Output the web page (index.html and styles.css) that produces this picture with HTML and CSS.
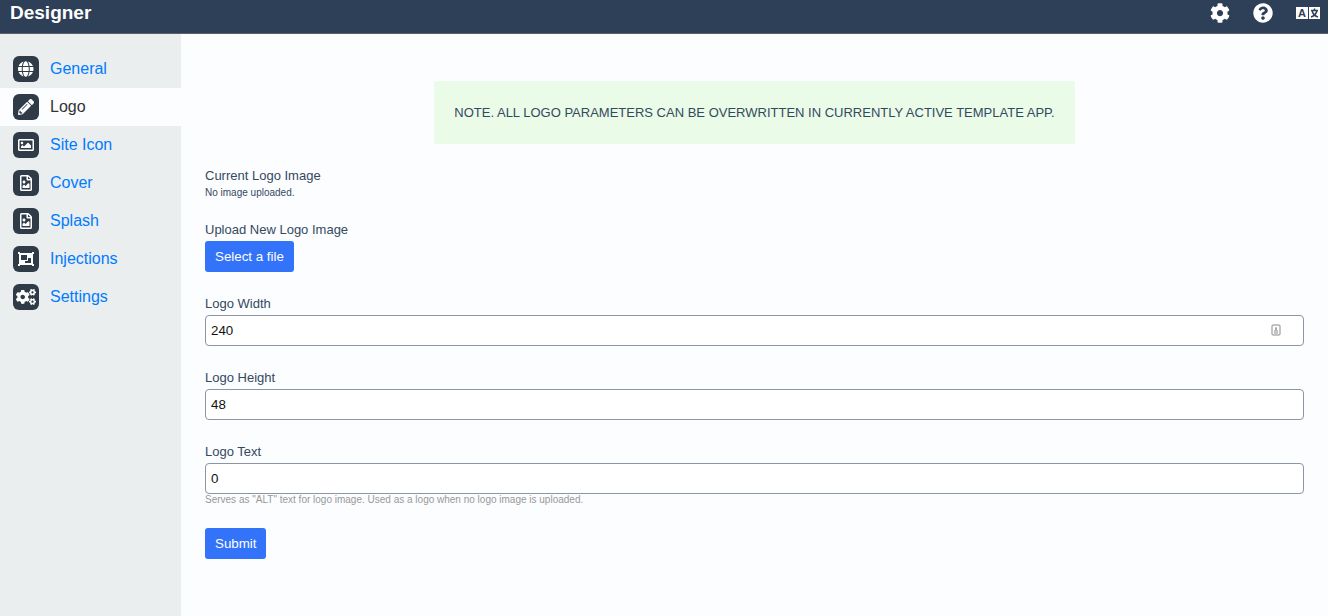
FILE: index.html
```html
<!DOCTYPE html>
<html lang="en">
<head>
    <meta charset="UTF-8">
    <meta name="viewport" content="width=device-width, initial-scale=1.0">
    <title>Designer</title>
    <link rel="stylesheet" href="styles.css">
</head>
<body>
    <header class="header">
        <h1 class="title">Designer</h1>
        <nav class="tools">
            <a href="#settings" aria-label="Settings">
                <svg class="tool-icon" viewBox="0 0 512 512"><path d="M487.4 315.7l-42.6-24.6c4.3-23.2 4.3-47 0-70.2l42.6-24.6c4.9-2.8 7.1-8.6 5.5-14-11.1-35.6-30-67.8-54.7-94.6-3.8-4.1-10-5.1-14.8-2.3L380.8 110c-17.9-15.4-38.5-27.3-60.8-35.1V25.8c0-5.6-3.9-10.5-9.4-11.7-36.7-8.2-74.3-7.8-109.2 0-5.5 1.2-9.4 6.1-9.4 11.7V75c-22.2 7.9-42.8 19.8-60.8 35.1L88.7 85.5c-4.9-2.8-11-1.9-14.8 2.3-24.7 26.7-43.6 58.9-54.7 94.6-1.7 5.4.6 11.2 5.5 14L67.3 221c-4.3 23.2-4.3 47 0 70.2l-42.6 24.6c-4.9 2.8-7.1 8.6-5.5 14 11.1 35.6 30 67.8 54.7 94.6 3.8 4.1 10 5.1 14.8 2.3l42.6-24.6c17.9 15.4 38.5 27.3 60.8 35.1v49.2c0 5.6 3.9 10.5 9.4 11.7 36.7 8.2 74.3 7.8 109.2 0 5.5-1.2 9.4-6.1 9.4-11.7v-49.2c22.2-7.9 42.8-19.8 60.8-35.1l42.6 24.6c4.9 2.8 11 1.9 14.8-2.3 24.7-26.7 43.6-58.9 54.7-94.6 1.5-5.5-.7-11.3-5.6-14.1zM256 336c-44.1 0-80-35.9-80-80s35.9-80 80-80 80 35.9 80 80-35.9 80-80 80z"/></svg>
            </a>
            <a href="#help" aria-label="Help">
                <svg class="tool-icon" viewBox="0 0 512 512"><path d="M504 256c0 136.997-111.043 248-248 248S8 392.997 8 256C8 119.083 119.043 8 256 8s248 111.083 248 248zM262.655 90c-54.497 0-89.255 22.957-116.549 63.758-3.536 5.286-2.353 12.415 2.715 16.258l34.699 26.31c5.205 3.947 12.621 3.008 16.665-2.122 17.864-22.658 30.113-35.797 57.303-35.797 20.429 0 45.698 13.148 45.698 32.958 0 14.976-12.363 22.667-32.534 33.976C247.128 238.528 216 254.941 216 296v4c0 6.627 5.373 12 12 12h56c6.627 0 12-5.373 12-12v-1.333c0-28.462 83.186-29.647 83.186-106.667 0-58.002-60.165-102-116.531-102zM256 338c-25.365 0-46 20.635-46 46 0 25.364 20.635 46 46 46s46-20.636 46-46c0-25.365-20.635-46-46-46z"/></svg>
            </a>
            <a href="#language" aria-label="Language">
                <svg class="tool-icon language" viewBox="0 0 24 20"><path d="M0 4h12v12H0zM13 4h11v12H13z"/><text class="latin" x="6" y="14">A</text><path class="stroke" d="M18.5 5.5v2M15 7.5h7M21 7.5q-1 5-6 6.5M16 7.5q1 5 6 6.5"/></svg>
            </a>
        </nav>
    </header>
    <div class="layout">
        <nav class="sidebar">
            <a class="item" href="#general">
                <span class="badge"><svg viewBox="0 0 496 512"><path d="M336.5 160C322 70.7 287.8 8 248 8s-74 62.7-88.5 152h177zM152 256c0 22.2 1.2 43.5 3.3 64h185.3c2.1-20.5 3.3-41.8 3.3-64s-1.2-43.5-3.3-64H155.3c-2.1 20.5-3.3 41.8-3.3 64zm324.7-96c-28.6-67.9-86.5-120.4-158-141.6 24.4 33.8 41.2 84.7 50 141.6h108zM177.2 18.4C105.8 39.6 47.8 92.1 19.3 160h108c8.7-56.9 25.5-107.8 49.9-141.6zM487.4 192H372.7c2.1 21 3.3 42.5 3.3 64s-1.2 43-3.3 64h114.6c5.5-20.5 8.6-41.8 8.6-64s-3.1-43.5-8.5-64zM120 256c0-21.5 1.2-43 3.3-64H8.6C3.2 212.5 0 233.8 0 256s3.2 43.5 8.6 64h114.6c-2-21-3.2-42.5-3.2-64zm39.5 96c14.5 89.3 48.7 152 88.5 152s74-62.7 88.5-152h-177zm159.3 141.6c71.4-21.2 129.4-73.7 158-141.6h-108c-8.8 56.9-25.6 107.8-50 141.6zM19.3 352c28.6 67.9 86.5 120.4 158 141.6-24.4-33.8-41.2-84.7-50-141.6h-108z"/></svg></span>
                General
            </a>
            <a class="item active" href="#logo">
                <span class="badge"><svg viewBox="0 0 512 512"><path d="M497.9 142.1l-46.1 46.1c-4.7 4.7-12.3 4.7-17 0l-111-111c-4.7-4.7-4.7-12.3 0-17l46.1-46.1c18.7-18.7 49.1-18.7 67.9 0l60.1 60.1c18.8 18.7 18.8 49.1 0 67.9zM284.2 99.8L21.6 362.4.4 483.9c-2.9 16.4 11.4 30.6 27.8 27.8l121.5-21.3 262.6-262.6c4.7-4.7 4.7-12.3 0-17l-111-111c-4.8-4.7-12.4-4.7-17.1 0zM124.1 339.9c-5.5-5.5-5.5-14.3 0-19.8l154-154c5.5-5.5 14.3-5.5 19.8 0s5.5 14.3 0 19.8l-154 154c-5.5 5.5-14.3 5.5-19.8 0zM88 424h48v36.3l-64.5 11.3-31.1-31.1L51.7 376H88v48z"/></svg></span>
                Logo
            </a>
            <a class="item" href="#icon">
                <span class="badge"><svg viewBox="0 0 512 512"><path d="M464 64H48C21.49 64 0 85.49 0 112v288c0 26.51 21.49 48 48 48h416c26.51 0 48-21.49 48-48V112c0-26.51-21.49-48-48-48zm-6 336H54a6 6 0 0 1-6-6V118a6 6 0 0 1 6-6h404a6 6 0 0 1 6 6v276a6 6 0 0 1-6 6zM128 152c-22.091 0-40 17.909-40 40s17.909 40 40 40 40-17.909 40-40-17.909-40-40-40zM96 352h320v-80l-87.515-87.515c-4.686-4.686-12.284-4.686-16.971 0L192 304l-39.515-39.515c-4.686-4.686-12.284-4.686-16.971 0L96 304v48z"/></svg></span>
                Site Icon
            </a>
            <a class="item" href="#cover">
                <span class="badge"><svg viewBox="0 0 384 512"><path d="M369.9 97.9L286 14C277 5 264.8-.1 252.1-.1H48C21.5 0 0 21.5 0 48v416c0 26.5 21.5 48 48 48h288c26.5 0 48-21.5 48-48V131.9c0-12.7-5.1-25-14.1-34zM332.1 128H256V51.9l76.1 76.1zM48 464V48h160v104c0 13.3 10.7 24 24 24h104v288H48zm32-48h224V288l-23.5-23.5c-4.7-4.7-12.3-4.7-17 0L176 352l-39.5-39.5c-4.7-4.7-12.3-4.7-17 0L80 352v64zm48-240c-26.5 0-48 21.5-48 48s21.5 48 48 48 48-21.5 48-48-21.5-48-48-48z"/></svg></span>
                Cover
            </a>
            <a class="item" href="#splash">
                <span class="badge"><svg viewBox="0 0 384 512"><path d="M369.9 97.9L286 14C277 5 264.8-.1 252.1-.1H48C21.5 0 0 21.5 0 48v416c0 26.5 21.5 48 48 48h288c26.5 0 48-21.5 48-48V131.9c0-12.7-5.1-25-14.1-34zM332.1 128H256V51.9l76.1 76.1zM48 464V48h160v104c0 13.3 10.7 24 24 24h104v288H48zm32-48h224V288l-23.5-23.5c-4.7-4.7-12.3-4.7-17 0L176 352l-39.5-39.5c-4.7-4.7-12.3-4.7-17 0L80 352v64zm48-240c-26.5 0-48 21.5-48 48s21.5 48 48 48 48-21.5 48-48-21.5-48-48-48z"/></svg></span>
                Splash
            </a>
            <a class="item" href="#injections">
                <span class="badge"><svg viewBox="0 0 512 512"><path fill-rule="evenodd" d="M480 128V96h20c6.627 0 12-5.373 12-12V44c0-6.627-5.373-12-12-12h-40c-6.627 0-12 5.373-12 12v20H64V44c0-6.627-5.373-12-12-12H12C5.373 32 0 37.373 0 44v40c0 6.627 5.373 12 12 12h20v320H12c-6.627 0-12 5.373-12 12v40c0 6.627 5.373 12 12 12h40c6.627 0 12-5.373 12-12v-20h384v20c0 6.627 5.373 12 12 12h40c6.627 0 12-5.373 12-12v-40c0-6.627-5.373-12-12-12h-20V128zM96 276V140c0-6.627 5.373-12 12-12h168c6.627 0 12 5.373 12 12v136c0 6.627-5.373 12-12 12H108c-6.627 0-12-5.373-12-12zm320 96c0 6.627-5.373 12-12 12H236c-6.627 0-12-5.373-12-12v-52h72c13.255 0 24-10.745 24-24v-72h84c6.627 0 12 5.373 12 12v136z"/></svg></span>
                Injections
            </a>
            <a class="item" href="#settings">
                <span class="badge"><svg viewBox="0 0 640 512"><path d="M512.1 191l-8.2 14.3c-3 5.3-9.4 7.5-15.1 5.4-11.8-4.4-22.6-10.7-32.1-18.6-4.6-3.8-5.8-10.5-2.8-15.7l8.2-14.3c-6.9-8-12.3-17.3-15.9-27.4h-16.5c-6 0-11.2-4.3-12.2-10.3-2-12-2.1-24.6 0-37.1 1-6 6.2-10.4 12.2-10.4h16.5c3.6-10.1 9-19.4 15.9-27.4l-8.2-14.3c-3-5.2-1.9-11.9 2.8-15.7 9.5-7.9 20.4-14.2 32.1-18.6 5.7-2.1 12.1.1 15.1 5.4l8.2 14.3c10.5-1.9 21.2-1.9 31.7 0L552 6.3c3-5.3 9.4-7.5 15.1-5.4 11.8 4.4 22.6 10.7 32.1 18.6 4.6 3.8 5.8 10.5 2.8 15.7l-8.2 14.3c6.9 8 12.3 17.3 15.9 27.4h16.5c6 0 11.2 4.3 12.2 10.3 2 12 2.1 24.6 0 37.1-1 6-6.2 10.4-12.2 10.4h-16.5c-3.6 10.1-9 19.4-15.9 27.4l8.2 14.3c3 5.2 1.9 11.9-2.8 15.7-9.5 7.9-20.4 14.2-32.1 18.6-5.7 2.1-12.1-.1-15.1-5.4l-8.2-14.3c-10.4 1.9-21.2 1.9-31.7 0zm-10.5-58.8c38.5 29.6 82.4-14.3 52.8-52.8-38.5-29.7-82.4 14.3-52.8 52.8zM386.3 286.1l33.7 16.8c10.1 5.8 14.5 18.1 10.5 29.1-8.9 24.2-26.4 46.4-42.6 65.8-7.4 8.9-20.2 11.1-30.3 5.3l-29.1-16.8c-16 13.7-34.6 24.6-54.9 31.7v33.6c0 11.6-8.3 21.6-19.7 23.6-24.6 4.2-50.4 4.4-75.9 0-11.5-2-20-11.9-20-23.6V418c-20.3-7.2-38.9-18-54.9-31.7L74 403c-10 5.8-22.9 3.6-30.3-5.3-16.2-19.4-33.3-41.6-42.2-65.7-4-10.9.4-23.2 10.5-29.1l33.3-16.8c-3.9-20.9-3.9-42.4 0-63.4L12 205.8c-10.1-5.8-14.6-18.1-10.5-29 8.9-24.2 26-46.4 42.2-65.8 7.4-8.9 20.2-11.1 30.3-5.3l29.1 16.8c16-13.7 34.6-24.6 54.9-31.7V57.1c0-11.5 8.2-21.5 19.6-23.5 24.6-4.2 50.5-4.4 76-.1 11.5 2 20 11.9 20 23.6v33.6c20.3 7.2 38.9 18 54.9 31.7l29.1-16.8c10-5.8 22.9-3.6 30.3 5.3 16.2 19.4 33.2 41.6 42.1 65.8 4 10.9.1 23.2-10 29.1l-33.7 16.8c3.9 21 3.9 42.5 0 63.5zm-117.6 21.1c59.2-77-28.7-164.9-105.7-105.7-59.2 77 28.7 164.9 105.7 105.7zm243.4 182.7l-8.2 14.3c-3 5.3-9.4 7.5-15.1 5.4-11.8-4.4-22.6-10.7-32.1-18.6-4.6-3.8-5.8-10.5-2.8-15.7l8.2-14.3c-6.9-8-12.3-17.3-15.9-27.4h-16.5c-6 0-11.2-4.3-12.2-10.3-2-12-2.1-24.6 0-37.1 1-6 6.2-10.4 12.2-10.4h16.5c3.6-10.1 9-19.4 15.9-27.4l-8.2-14.3c-3-5.2-1.9-11.9 2.8-15.7 9.5-7.9 20.4-14.2 32.1-18.6 5.7-2.1 12.1.1 15.1 5.4l8.2 14.3c10.5-1.9 21.2-1.9 31.7 0l8.2-14.3c3-5.3 9.4-7.5 15.1-5.4 11.8 4.4 22.6 10.7 32.1 18.6 4.6 3.8 5.8 10.5 2.8 15.7l-8.2 14.3c6.9 8 12.3 17.3 15.9 27.4h16.5c6 0 11.2 4.3 12.2 10.3 2 12 2.1 24.6 0 37.1-1 6-6.2 10.4-12.2 10.4h-16.5c-3.6 10.1-9 19.4-15.9 27.4l8.2 14.3c3 5.2 1.9 11.9-2.8 15.7-9.5 7.9-20.4 14.2-32.1 18.6-5.7 2.1-12.1-.1-15.1-5.4l-8.2-14.3c-10.4 1.9-21.2 1.9-31.7 0zM501.6 431c38.5 29.6 82.4-14.3 52.8-52.8-38.5-29.6-82.4 14.3-52.8 52.8z"/></svg></span>
                Settings
            </a>
        </nav>
        <main class="content">
            <p class="note">Note. All logo parameters can be overwritten in currently active template app.</p>
            <form class="form">
                <div class="field">
                    <p class="label">Current Logo Image</p>
                    <p class="small">No image uploaded.</p>
                </div>
                <div class="field">
                    <label class="label" for="file">Upload New Logo Image</label>
                    <button class="button" id="file" type="button">Select a file</button>
                </div>
                <div class="field">
                    <label class="label" for="width">Logo Width</label>
                    <div class="control">
                        <input class="input" id="width" type="text" value="240">
                        <svg class="autofill" viewBox="0 0 10 12"><rect x="1" y="1" width="8" height="10" rx="1"/><path d="M5 3v3M4 5h2M3 7h4M3 9h4"/></svg>
                    </div>
                </div>
                <div class="field">
                    <label class="label" for="height">Logo Height</label>
                    <input class="input" id="height" type="text" value="48">
                </div>
                <div class="field">
                    <label class="label" for="text">Logo Text</label>
                    <input class="input" id="text" type="text" value="0">
                    <p class="small hint">Serves as "ALT" text for logo image. Used as a logo when no logo image is uploaded.</p>
                </div>
                <button class="button" type="submit">Submit</button>
            </form>
        </main>
    </div>
</body>
</html>
```
FILE: styles.css
```css
*,
*::before,
*::after {
    box-sizing: border-box;
    padding: 0;
    margin: 0;
}

body {
    display: flex;
    flex-direction: column;
    min-height: 100vh;
    background-color: #fcfdff;
    color: #34495e;
    font-family: "Liberation Sans", Arial, sans-serif;
    font-size: 13px;
    line-height: 18px;
}

.header {
    display: flex;
    align-items: center;
    justify-content: space-between;
    padding: 0 8px 8px 10px;
    border-bottom: 1px solid #5d6069;
    background-color: #2e4057;
    color: white;
}
.title {
    font-size: 19px;
    line-height: 25px;
}
.tools {
    display: flex;
    gap: 23px;
}
.tools a {
    display: flex;
}
.tool-icon {
    width: 20px;
    height: 20px;
    fill: white;
}
.language {
    width: 24px;
}
.latin {
    fill: #2e4057;
    font-size: 11px;
    font-weight: bold;
    text-anchor: middle;
}
.stroke {
    fill: none;
    stroke: #2e4057;
    stroke-width: 1.5;
}

.layout {
    display: flex;
    flex: 1;
}
.sidebar {
    flex: 0 0 181px;
    padding-top: 16px;
    background-color: #eaeeee;
}
.item {
    display: flex;
    align-items: center;
    gap: 11px;
    height: 38px;
    padding-left: 13px;
    color: #007bff;
    font-size: 16px;
    text-decoration: none;
}
.active {
    background-color: #fcfdff;
    color: #333;
}
.badge {
    display: flex;
    align-items: center;
    justify-content: center;
    width: 26px;
    height: 26px;
    border-radius: 6px;
    background-color: #2f3b47;
}
.badge svg {
    height: 16px;
    fill: white;
}

.content {
    flex: 1;
    padding: 47px 24px;
}
.note {
    width: fit-content;
    margin: 0 auto 23px;
    padding: 23px 20px 22px;
    border-radius: 2px;
    background-color: #eafce8;
    text-transform: uppercase;
}
.form {
    display: flex;
    flex-direction: column;
    align-items: flex-start;
    gap: 23px;
}
.field {
    display: flex;
    flex-direction: column;
    align-items: flex-start;
    width: 100%;
}
.label {
    margin-bottom: 2px;
}
.small {
    font-size: 10px;
    line-height: 11px;
}
.hint {
    color: #999;
}
.button {
    height: 31px;
    padding: 0 10px;
    border: none;
    border-radius: 3px;
    background-color: #3273fa;
    color: white;
    font-family: inherit;
}
.control {
    position: relative;
    width: 100%;
}
.input {
    display: block;
    width: 100%;
    height: 31px;
    padding: 0 5px;
    border: 1px solid #8b95a5;
    border-radius: 4px;
    background-color: white;
    color: #111;
    font-family: inherit;
}
.autofill {
    position: absolute;
    top: 9px;
    right: 23px;
    width: 10px;
    height: 12px;
    fill: none;
    stroke: #888;
}
```
